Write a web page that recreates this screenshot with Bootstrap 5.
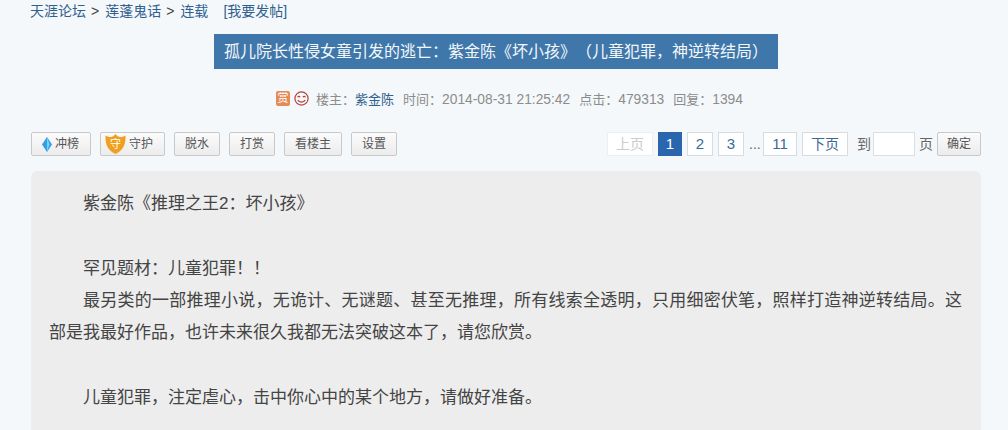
<!DOCTYPE html>
<html lang="zh-CN">
<head>
    <meta charset="UTF-8">
    <meta name="viewport" content="width=device-width, initial-scale=1.0">
    <title>孤儿院长性侵女童引发的逃亡</title>
    <link href="https://cdn.jsdelivr.net/npm/bootstrap@5.3.0/dist/css/bootstrap.min.css" rel="stylesheet">
    <style>
        body {
            font-family: "Liberation Sans", "Noto Sans CJK SC", sans-serif;
            background-color: #f5f8fa;
            color: #444;
            text-spacing-trim: space-all;
        }

        a {
            color: #2f618f;
            text-decoration: none;
        }

        .page-wrap {
            width: 950px;
            margin-left: 31px;
        }

        .crumbs {
            height: 34px;
            padding-top: 2px;
            margin-left: -1px;
            font-size: 14px;
            line-height: 18px;
            gap: 5px;
        }

        .crumbs .sep {
            color: #444;
            margin-right: 1px;
        }

        .crumbs .post-link {
            margin-left: 10px;
        }

        .thread-title {
            width: 564px;
            height: 35px;
            margin-left: 183px;
            margin-bottom: 0;
            background-color: #3f77ab;
            color: #f4f7fa;
            font-size: 16px;
            font-weight: 400;
            line-height: 35px;
            text-align: center;
        }

        .thread-meta {
            height: 63px;
            padding-top: 22px;
            padding-left: 7px;
            color: #8c8c8c;
            font-size: 13px;
            line-height: 18px;
            gap: 9px;
        }

        .thread-meta .who {
            gap: 4px;
            margin-right: -2px;
        }

        .thread-meta .num {
            font-size: 13.8px;
        }

        .rank-box {
            width: 14px;
            height: 15px;
            background-color: #e58b58;
            color: #fff;
            font-size: 11px;
            line-height: 15px;
            text-align: center;
            border-radius: 2px;
        }

        .tools {
            height: 39px;
            align-items: flex-start;
        }

        .tool-group {
            gap: 9px;
        }

        .tool-btn {
            height: 24px;
            padding: 0 10px;
            font-size: 12px;
            line-height: 22px;
            color: #555;
            background: linear-gradient(#fbfbfb, #ececec);
            border: 1px solid #c9c9c9;
            border-radius: 2px;
        }

        .tool-btn .gem {
            margin-right: 3px;
        }

        .tool-btn.rush {
            padding-right: 11px;
        }

        .tool-btn.guard {
            padding: 0 11px 0 4px;
        }

        .tool-btn .shield {
            margin-right: 3px;
        }

        .tool-btn.ok-btn {
            width: 44px;
            padding: 0;
        }

        .pager {
            height: 24px;
            gap: 5px;
            font-size: 14px;
            line-height: 22px;
            color: #666;
        }

        .pg {
            height: 24px;
            width: 26px;
            background-color: #fff;
            border: 1px solid #d5dde3;
            color: #3a6a94;
            font-size: 15px;
            text-align: center;
        }

        .pg.w-word {
            width: 46px;
            font-size: 14px;
        }

        .pg.w-two {
            width: 34px;
        }

        .pg.off {
            color: #ccc;
            border-color: #eceff1;
        }

        .pg.on {
            width: 24px;
            background-color: #2a66ad;
            border-color: #2a66ad;
            color: #fff;
        }

        .pg-dots {
            width: 9px;
            text-align: center;
        }

        .pg-to {
            margin: 0 -3px 0 4px;
        }

        .pg-input {
            width: 42px;
            height: 24px;
            background-color: #fff;
            border: 1px solid #d9e0e5;
        }

        .pg-unit {
            margin: 0 -1px;
        }

        .post-box {
            height: 259px;
            padding: 17px 19px 0 18px;
            background-color: #ededed;
            border-radius: 6px 6px 0 0;
            font-size: 17px;
            line-height: 32.3px;
            color: #444;
            text-align: justify;
        }

        .post-box p {
            margin: 0;
            text-indent: 2em;
            min-height: 32.3px;
        }
    </style>
</head>
<body>
    <div class="page-wrap">
        <div class="crumbs d-flex">
            <a href="#">天涯论坛</a><span class="sep">&gt;</span>
            <a href="#">莲蓬鬼话</a><span class="sep">&gt;</span>
            <a href="#">连载</a>
            <a href="#" class="post-link">[我要发帖]</a>
        </div>

        <h1 class="thread-title">孤儿院长性侵女童引发的逃亡：紫金陈《坏小孩》（儿童犯罪，神逆转结局）</h1>

        <div class="thread-meta d-flex justify-content-center align-items-start">
            <span class="who d-flex align-items-center">
                <span class="rank-box">赏</span>
                <svg width="15" height="15" viewBox="0 0 15 15" fill="none" stroke="#b5413c" stroke-width="1.2">
                    <circle cx="7.5" cy="7.5" r="6.6"/>
                    <path d="M3.600 6.200c.6-1 1.900-1 2.500 0M8.900 6.200c.6-1 1.900-1 2.500 0M3.800 9c1.400 2.800 6 2.800 7.400 0"/>
                </svg>
            </span>
            <span>楼主：<a href="#">紫金陈</a></span>
            <span>时间：<span class="num">2014-08-31 21:25:42</span></span>
            <span>点击：<span class="num">479313</span></span>
            <span>回复：<span class="num">1394</span></span>
        </div>

        <div class="tools d-flex justify-content-between">
            <div class="tool-group d-flex">
                <button type="button" class="tool-btn rush d-flex align-items-center">
                    <svg class="gem" width="10" height="15" viewBox="0 0 10 15">
                        <path d="M5 0l5 7.500L5 15 0 7.500z" fill="#2f9fe8"/>
                        <path d="M5 0l2.500 7.500L5 15z" fill="#7fd0f7"/>
                    </svg>
                    <span>冲榜</span>
                </button>
                <button type="button" class="tool-btn guard d-flex align-items-center">
                    <svg class="shield" width="21" height="20" viewBox="0 0 21 20">
                        <path d="M.500 1.500c2.500 1.500 3.500 1.500 5 1.500 2 0 3.500-1 5-3 1.500 2 3 3 5 3 1.500 0 2.500 0 5-1.500 .5 8-2 15-10 18.500C2.500 16.500 0 9.500.500 1.500z" fill="#f0a01e"/>
                        <text x="10.500" y="14" font-size="11" fill="#fff" text-anchor="middle">守</text>
                    </svg>
                    <span>守护</span>
                </button>
                <button type="button" class="tool-btn">脱水</button>
                <button type="button" class="tool-btn">打赏</button>
                <button type="button" class="tool-btn">看楼主</button>
                <button type="button" class="tool-btn">设置</button>
            </div>
            <div class="pager d-flex align-items-center">
                <a href="#" class="pg w-word off">上页</a>
                <a href="#" class="pg on">1</a>
                <a href="#" class="pg">2</a>
                <a href="#" class="pg">3</a>
                <span class="pg-dots">...</span>
                <a href="#" class="pg w-two">11</a>
                <a href="#" class="pg w-word">下页</a>
                <span class="pg-to">到</span>
                <input type="text" class="pg-input" aria-label="页码">
                <span class="pg-unit">页</span>
                <button type="button" class="tool-btn ok-btn">确定</button>
            </div>
        </div>

        <div class="post-box">
            <p>紫金陈《推理之王2：坏小孩》</p>
            <p></p>
            <p>罕见题材：儿童犯罪！！</p>
            <p>最另类的一部推理小说，无诡计、无谜题、甚至无推理，所有线索全透明，只用细密伏笔，照样打造神逆转结局。这部是我最好作品，也许未来很久我都无法突破这本了，请您欣赏。</p>
            <p></p>
            <p>儿童犯罪，注定虐心，击中你心中的某个地方，请做好准备。</p>
        </div>
    </div>

    <script src="https://cdn.jsdelivr.net/npm/bootstrap@5.3.0/dist/js/bootstrap.bundle.min.js"></script>
</body>
</html>
